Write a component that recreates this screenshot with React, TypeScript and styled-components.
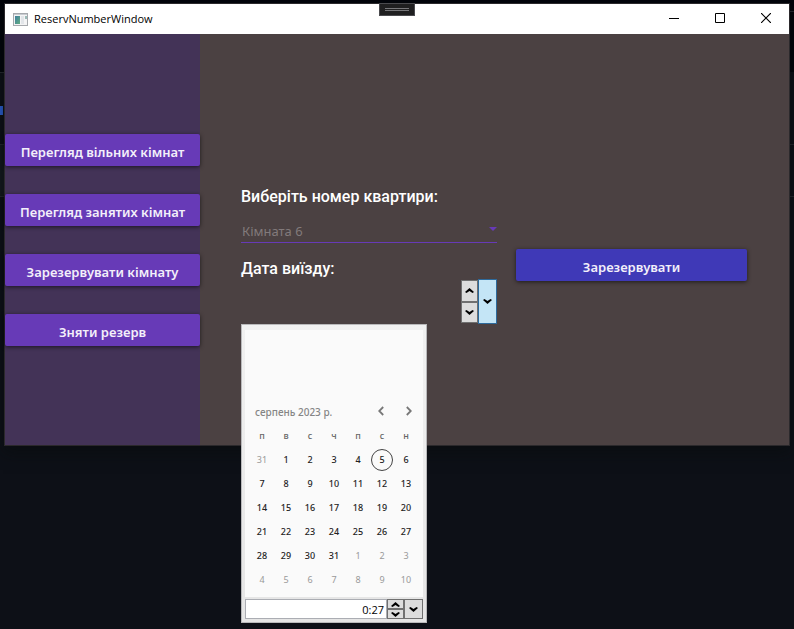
import React from "react";
import styled, { createGlobalStyle } from "styled-components";

const GlobalStyle = createGlobalStyle`
  * { box-sizing: border-box; }
  body {
    margin: 0;
    background: #0d1017;
    font-family: "Noto Sans", "Open Sans", sans-serif;
  }
  button, input, select { font-family: inherit; margin: 0; }
`;

const Desktop = styled.div`
  position: relative;
  min-height: 100vh;
  padding: 4px 5px;
  overflow: hidden;
  background:
    linear-gradient(#2a5fd0, #2a5fd0) 0 106px / 3px 9px no-repeat,
    linear-gradient(#26292f, #26292f) 0 72px / 5px 1px no-repeat,
    linear-gradient(#26292f, #26292f) 0 144px / 5px 1px no-repeat,
    linear-gradient(#26292f, #26292f) 0 196px / 5px 1px no-repeat,
    linear-gradient(#14191e, #14191e) 0 145px / 5px 51px no-repeat,
    linear-gradient(#26292f, #26292f) 100% 11px / 5px 1px no-repeat,
    linear-gradient(#26292f, #26292f) 100% 144px / 5px 1px no-repeat,
    linear-gradient(#26292f, #26292f) 100% 196px / 5px 1px no-repeat,
    linear-gradient(#02040a, #02040a) 0 0 / 100% 72px no-repeat,
    #0d1017;
`;

const AppWindow = styled.div`
  display: flex;
  flex-direction: column;
  box-shadow: 0 0 0 1px #2b292c, 0 6px 14px 2px rgba(8, 12, 12, 0.5);
`;

const TitleBar = styled.header`
  display: flex;
  align-items: center;
  height: 30px;
  padding-left: 8px;
  gap: 6px;
  background: #fff;
  color: #000;
`;

const Title = styled.h1`
  flex: 1;
  margin: 0;
  font-family: "Open Sans", sans-serif;
  font-size: 11px;
  font-weight: 400;
  line-height: 16px;
`;

const CaptionButton = styled.button`
  display: flex;
  align-items: center;
  justify-content: center;
  width: 46px;
  height: 30px;
  margin-left: -6px;
  padding: 0 0 2px;
  border: 0;
  background: none;
`;

const DebugHandle = styled.button`
  position: absolute;
  top: 3px;
  left: 50%;
  display: flex;
  flex-direction: column;
  justify-content: center;
  gap: 1px;
  width: 36px;
  height: 13px;
  margin-left: -18px;
  padding: 0 5px;
  border: 1px solid #4a4a4e;
  background: #1f1f20;
`;

const HandleLine = styled.span`
  height: 1px;
  background: #77777a;
`;

const Body = styled.div`
  display: flex;
  min-height: 411px;
  background: #4b4142;
`;

const Sidebar = styled.nav`
  display: flex;
  flex-direction: column;
  gap: 28px;
  width: 195px;
  padding-top: 100px;
  background: #433357;
`;

const RaisedButton = styled.button<{ $tone: string }>`
  display: block;
  width: 100%;
  height: 32px;
  padding: 4px 0 0;
  border: 0;
  border-radius: 2px;
  background: ${(p) => p.$tone};
  color: #f3effa;
  font-size: 13px;
  font-weight: 600;
  line-height: 20px;
  white-space: nowrap;
  box-shadow: 0 1px 4px rgba(0, 0, 0, 0.6);
`;

const Main = styled.main`
  flex: 1;
  display: grid;
  grid-template-columns: 256px 1fr;
  column-gap: 19px;
  align-items: start;
  padding: 153px 42px 0 41px;
`;

const Form = styled.form`
  display: flex;
  flex-direction: column;
`;

const Label = styled.label`
  color: #fff;
  font-family: Roboto, sans-serif;
  font-size: 16px;
  font-weight: 500;
  line-height: 20px;
`;

const SelectBox = styled.div`
  display: grid;
  align-items: center;
  height: 36px;
  margin-bottom: 16px;
  border-bottom: 1px solid #673ab7;
  > * { grid-area: 1 / 1; }
  > svg { justify-self: end; margin-top: 8px; pointer-events: none; }
`;

const RoomSelect = styled.select`
  appearance: none;
  height: 35px;
  padding: 12px 20px 0 1px;
  border: 0;
  background: none;
  color: #827a7b;
  font-size: 13px;
  line-height: 20px;
`;

const PickerRow = styled.div`
  position: relative;
  display: flex;
  justify-content: flex-end;
  height: 45px;
`;

const Spinner = styled.div<{ $small?: boolean }>`
  display: flex;
  flex-direction: column;
  width: 17px;
  height: ${(p) => (p.$small ? "20px" : "43px")};
  margin-top: ${(p) => (p.$small ? "0" : "1px")};
`;

const ArrowButton = styled.button<{ $open?: boolean; $wide?: boolean }>`
  display: flex;
  align-items: center;
  justify-content: center;
  flex: ${(p) => (p.$wide ? "0 0 19px" : "1")};
  min-height: 0;
  padding: 0;
  border: 1px solid ${(p) => (p.$open ? "#2d6a9c" : "#707070")};
  background: ${(p) => (p.$open ? "#c4e5f6" : "#dddddd")};
`;

const Action = styled.div`
  padding-top: 62px;
`;

const Popup = styled.div`
  position: absolute;
  top: 45px;
  left: 0;
  z-index: 2;
  width: 186px;
  padding: 5px 3px 3px;
  border: 1px solid #b9b9bb;
  background: linear-gradient(#f1f1f1, #e5e5e5);
`;

const Calendar = styled.div`
  padding: 68px 5px 5px;
  background: #fafafa;
`;

const CalendarHeader = styled.div`
  display: flex;
  align-items: center;
  height: 26px;
  padding-left: 5px;
`;

const MonthButton = styled.button`
  flex: 1;
  padding: 2px 0 0;
  border: 0;
  background: none;
  color: #858585;
  font-size: 10px;
  font-weight: 500;
  line-height: 16px;
  text-align: left;
  white-space: nowrap;
`;

const PageButton = styled.button`
  display: flex;
  align-items: center;
  justify-content: center;
  width: 28px;
  height: 24px;
  padding: 0;
  border: 0;
  background: none;
  &:last-child { margin-right: -5px; }
`;

const Days = styled.table`
  width: 100%;
  border-collapse: collapse;
  table-layout: fixed;
`;

const WeekDay = styled.th`
  height: 24px;
  padding: 0;
  color: #666;
  font-size: 9px;
  font-weight: 500;
  line-height: 12px;
`;

const DayCell = styled.td`
  height: 24px;
  padding: 0;
`;

const DayButton = styled.button<{ $muted: boolean; $today: boolean }>`
  display: flex;
  align-items: center;
  justify-content: center;
  width: 22px;
  height: 22px;
  margin: 0 auto;
  padding: 0;
  border: 1px solid ${(p) => (p.$today ? "#444" : "transparent")};
  border-radius: 50%;
  background: none;
  color: ${(p) => (p.$muted ? "#999" : "#222")};
  font-size: 9px;
  font-weight: ${(p) => (p.$muted ? 400 : 500)};
  line-height: 12px;
`;

const TimeRow = styled.div`
  display: flex;
  height: 20px;
  margin-top: 2px;
`;

const TimeInput = styled.input`
  flex: 1;
  min-width: 0;
  padding: 0 2px;
  border: 1px solid #abadb3;
  background: #fff;
  color: #000;
  font-family: "Open Sans", sans-serif;
  font-size: 11px;
  text-align: right;
`;

const Chevron = ({ up = false }: { up?: boolean }) => (
  <svg width="9" height="5" viewBox="0 0 9 5" aria-hidden="true">
    <path
      d={up ? "M0 4 4.5 0 9 4 7.5 5 4.5 3 1.5 5Z" : "M0 1 1.5 0 4.5 2 7.5 0 9 1 4.5 5Z"}
      fill="#000"
    />
  </svg>
);

const AppIcon = () => (
  <svg width="15" height="13" viewBox="0 0 15 13" aria-hidden="true">
    <defs>
      <linearGradient id="pane" x1="0" y1="0" x2="1" y2="1">
        <stop offset="0" stopColor="#3f7f9d" />
        <stop offset="1" stopColor="#63ad83" />
      </linearGradient>
    </defs>
    <rect x=".5" y=".5" width="14" height="12" fill="#f4f4f5" stroke="#a6a9ad" />
    <path d="M1 1.5h13" stroke="#c9cdd2" />
    <rect x="2" y="3" width="5" height="8" fill="url(#pane)" />
    <rect x="8" y="3" width="3" height="8" fill="#e2e5e9" />
    <rect x="12" y="3" width="2" height="3" fill="#9bbbb8" />
  </svg>
);

const menu = [
  "Перегляд вільних кімнат",
  "Перегляд занятих кімнат",
  "Зарезервувати кімнату",
  "Зняти резерв",
];

const weekDays = ["п", "в", "с", "ч", "п", "с", "н"];

const weeks = Array.from({ length: 6 }, (_, w) =>
  Array.from({ length: 7 }, (_, d) => {
    const n = w * 7 + d;
    const muted = n < 1 || n > 31;
    return { day: n < 1 ? 31 : n > 31 ? n - 31 : n, muted, today: n === 5 };
  })
);

export default function App() {
  return (
    <>
      <GlobalStyle />
      <Desktop>
        <AppWindow>
          <TitleBar>
            <AppIcon />
            <Title>ReservNumberWindow</Title>
            <CaptionButton aria-label="Згорнути">
              <svg width="10" height="10" viewBox="0 0 10 10">
                <path d="M0 5.5h10" stroke="#000" />
              </svg>
            </CaptionButton>
            <CaptionButton aria-label="Розгорнути">
              <svg width="10" height="10" viewBox="0 0 10 10">
                <path d="M.5.5h9v9h-9z" fill="none" stroke="#000" />
              </svg>
            </CaptionButton>
            <CaptionButton aria-label="Закрити">
              <svg width="10" height="10" viewBox="0 0 10 10">
                <path d="m0 0 10 10M10 0 0 10" stroke="#000" strokeWidth="1.2" />
              </svg>
            </CaptionButton>
          </TitleBar>
          <Body>
            <Sidebar>
              {menu.map((text) => (
                <RaisedButton key={text} $tone="#673ab7">{text}</RaisedButton>
              ))}
            </Sidebar>
            <Main>
              <Form id="reserve" onSubmit={(e) => e.preventDefault()}>
                <Label htmlFor="room">Виберіть номер квартири:</Label>
                <SelectBox>
                  <RoomSelect id="room" defaultValue="6">
                    <option value="6">Кімната 6</option>
                  </RoomSelect>
                  <svg width="8" height="4" viewBox="0 0 8 4" aria-hidden="true">
                    <path d="M0 0h8L4 4Z" fill="#673ab7" />
                  </svg>
                </SelectBox>
                <Label htmlFor="time">Дата виїзду:</Label>
                <PickerRow>
                  <Spinner>
                    <ArrowButton type="button" aria-label="Більше"><Chevron up /></ArrowButton>
                    <ArrowButton type="button" aria-label="Менше"><Chevron /></ArrowButton>
                  </Spinner>
                  <ArrowButton type="button" $open $wide aria-label="Календар"><Chevron /></ArrowButton>
                  <Popup>
                    <Calendar>
                      <CalendarHeader>
                        <MonthButton type="button">серпень 2023 р.</MonthButton>
                        <PageButton type="button" aria-label="Попередній місяць">
                          <svg width="6" height="10" viewBox="0 0 6 10">
                            <path d="M5.2 1 1.2 5l4 4" fill="none" stroke="#777" strokeWidth="1.8" />
                          </svg>
                        </PageButton>
                        <PageButton type="button" aria-label="Наступний місяць">
                          <svg width="6" height="10" viewBox="0 0 6 10">
                            <path d="m.8 1 4 4-4 4" fill="none" stroke="#777" strokeWidth="1.8" />
                          </svg>
                        </PageButton>
                      </CalendarHeader>
                      <Days>
                        <thead>
                          <tr>{weekDays.map((d, i) => <WeekDay key={i} scope="col">{d}</WeekDay>)}</tr>
                        </thead>
                        <tbody>
                          {weeks.map((week, i) => (
                            <tr key={i}>
                              {week.map((c, j) => (
                                <DayCell key={j}>
                                  <DayButton type="button" $muted={c.muted} $today={c.today}>{c.day}</DayButton>
                                </DayCell>
                              ))}
                            </tr>
                          ))}
                        </tbody>
                      </Days>
                    </Calendar>
                    <TimeRow>
                      <TimeInput id="time" defaultValue="0:27" />
                      <Spinner $small>
                        <ArrowButton type="button" aria-label="Пізніше"><Chevron up /></ArrowButton>
                        <ArrowButton type="button" aria-label="Раніше"><Chevron /></ArrowButton>
                      </Spinner>
                      <ArrowButton type="button" $wide aria-label="Вибрати час"><Chevron /></ArrowButton>
                    </TimeRow>
                  </Popup>
                </PickerRow>
              </Form>
              <Action>
                <RaisedButton type="submit" form="reserve" $tone="#3f39b7">Зарезервувати</RaisedButton>
              </Action>
            </Main>
          </Body>
        </AppWindow>
        <DebugHandle aria-label="Панель налагодження">
          <HandleLine />
          <HandleLine />
        </DebugHandle>
      </Desktop>
    </>
  );
}
